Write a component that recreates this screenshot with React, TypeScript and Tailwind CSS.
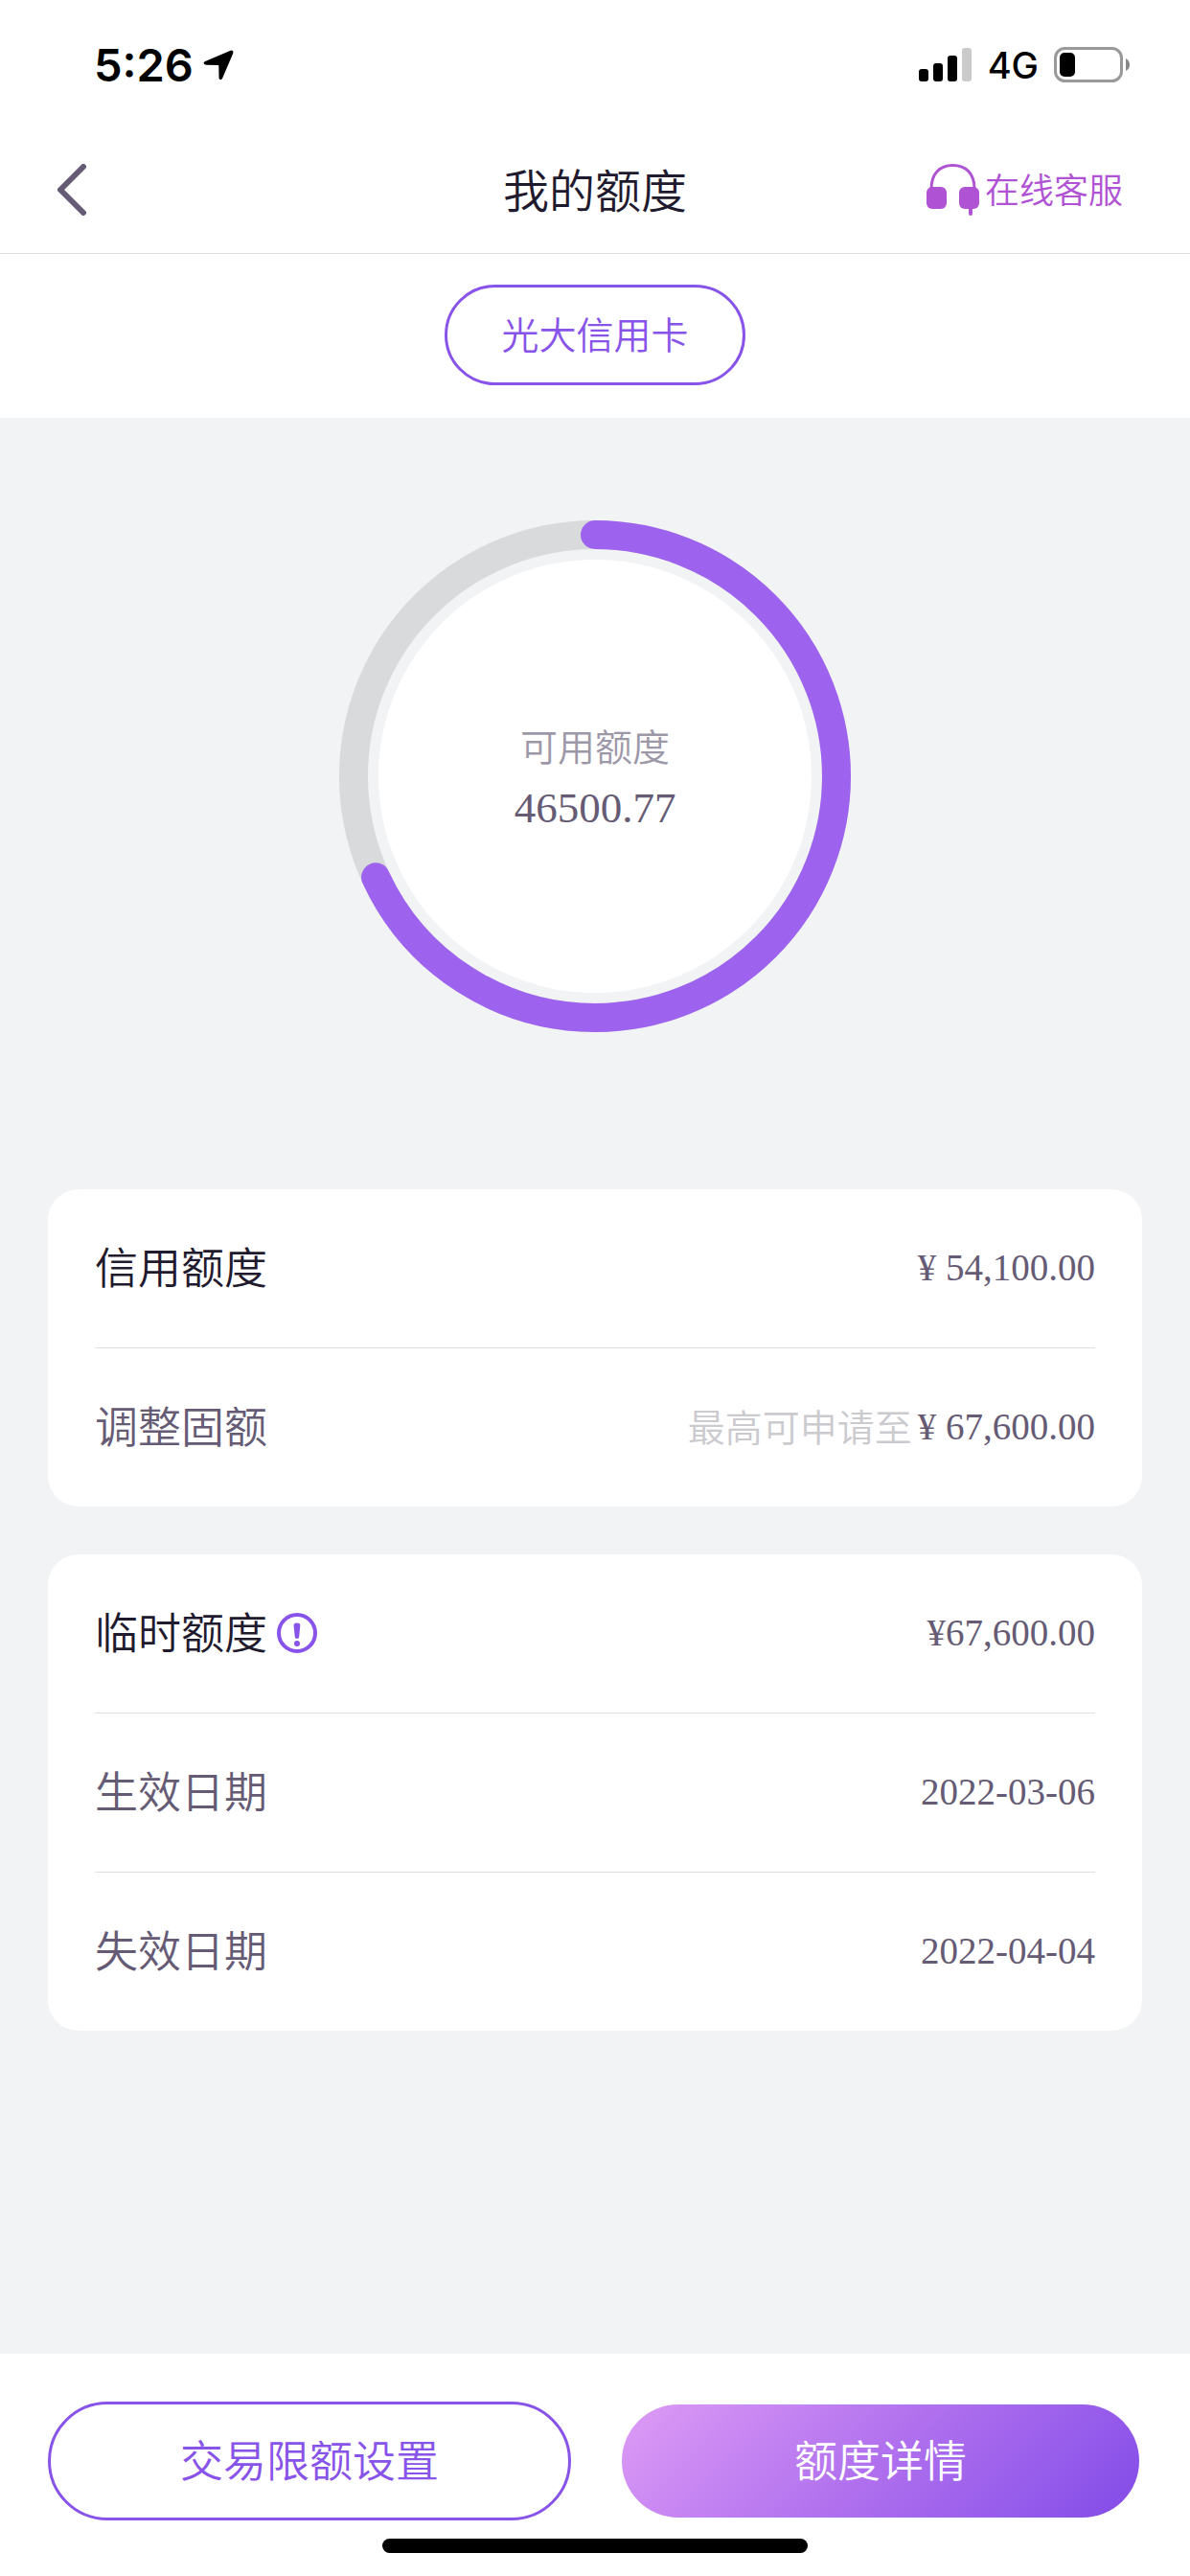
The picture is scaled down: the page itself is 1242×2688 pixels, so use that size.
interface LimitRow {
  label: string;
  value: string;
  hint?: string;
  primary?: boolean;
  info?: boolean;
}

const creditRows: LimitRow[] = [
  { label: "信用额度", value: "¥ 54,100.00", primary: true },
  { label: "调整固额", value: "¥ 67,600.00", hint: "最高可申请至" },
];

const temporaryRows: LimitRow[] = [
  { label: "临时额度", value: "¥67,600.00", primary: true, info: true },
  { label: "生效日期", value: "2022-03-06" },
  { label: "失效日期", value: "2022-04-04" },
];

const StatusBar = () => {
  return (
    <div className="flex h-[132px] items-start justify-between pt-12 pr-[62px] pl-[98px] font-['Inter',sans-serif] text-black">
      <div className="flex h-10 items-center gap-2.5">
        <span className="text-[47px] leading-10 font-semibold">5:26</span>
        <svg className="h-8 w-8" viewBox="0 0 32 32" fill="currentColor">
          <path d="M2.2 12.1 L28 0.9 Q32.4 -0.4 31.1 3.9 L20.2 29.6 Q18.9 32 17.3 30.8 Q16.5 30.2 16.5 29 L16.3 16.6 Q16.3 15.9 15.6 15.9 L3.2 15.8 Q0.6 15.4 0.5 13.7 Q0.6 12.7 2.2 12.1Z" />
        </svg>
      </div>
      <div className="flex h-10 items-center gap-4">
        <svg className="h-9 w-14" viewBox="0 0 56 36">
          <rect x="0" y="22" width="10" height="13" rx="3" />
          <rect x="15" y="16" width="10" height="19" rx="3" />
          <rect x="30" y="8" width="10" height="27" rx="3" />
          <rect x="45" y="0" width="10" height="35" rx="3" fill="#cacaca" />
        </svg>
        <span className="text-[38px] leading-10 font-medium">4G</span>
        <svg className="h-[38px] w-20" viewBox="0 0 80 38">
          <rect x="1.5" y="1.5" width="69" height="34" rx="10" fill="none" stroke="#999" strokeWidth="3" />
          <rect x="6" y="6" width="16" height="25" rx="5" />
          <path d="M75 12 Q79 14 79 18.5 Q79 23 75 25Z" fill="#888" />
        </svg>
      </div>
    </div>
  );
};

const Header = () => {
  return (
    <header className="grid h-[133px] grid-cols-3 items-center border-b border-[#dedede] px-[60px]">
      <button aria-label="返回" className="w-8 text-[#655b74]">
        <svg
          className="h-[54px] w-8"
          viewBox="0 0 32 54"
          fill="none"
          stroke="currentColor"
          strokeWidth="6"
          strokeLinecap="round"
          strokeLinejoin="round"
        >
          <path d="M27 3 L3 27 L27 51" />
        </svg>
      </button>
      <h1 className="pb-1 text-center text-[48px] leading-[60px] text-[#1f1a2d]">我的额度</h1>
      <a href="#service" className="flex items-center justify-end gap-1.5 pr-2.5 text-[36px] leading-[54px] text-[#b052d4]">
        <svg className="h-[54px] w-[55px]" viewBox="0 0 55 54" fill="currentColor">
          <path d="M5 26 C5 10 14 1.5 27.5 1.5 C41 1.5 50 10 50 26" fill="none" stroke="currentColor" strokeWidth="3" />
          <rect x="0" y="24" width="21" height="23" rx="6" />
          <rect x="34" y="24" width="21" height="23" rx="6" />
          <rect x="44" y="42" width="4" height="12" rx="2" />
        </svg>
        <span className="pb-1">在线客服</span>
      </a>
    </header>
  );
};

const LimitRing = () => {
  const radius = 252;
  const length = 2 * Math.PI * radius;
  const used = 0.681;

  return (
    <div className="grid place-items-center">
      <svg className="col-start-1 row-start-1 h-[534px] w-[534px]" viewBox="0 0 534 534" fill="none">
        <circle cx="267" cy="267" r={radius} stroke="#d9dadc" strokeWidth="30" />
        <circle cx="267" cy="267" r="226" fill="#fff" />
        <circle
          cx="267"
          cy="267"
          r={radius}
          stroke="#9e63ee"
          strokeWidth="30"
          strokeLinecap="round"
          strokeDasharray={`${length * used} ${length}`}
          transform="rotate(-90 267 267)"
        />
      </svg>
      <div className="col-start-1 row-start-1 text-center">
        <p className="pb-1.5 text-[39px] leading-[60px] text-[#9d98a8]">可用额度</p>
        <p className="font-['Liberation_Serif',serif] text-[45px] leading-[60px] text-[#655b74]">46500.77</p>
      </div>
    </div>
  );
};

const InfoIcon = () => {
  return (
    <svg className="h-[42px] w-[42px]" viewBox="0 0 42 42" fill="none">
      <circle cx="21" cy="21" r="19" stroke="#8853e8" strokeWidth="4" />
      <path d="M17.5 13 Q17.5 10.5 21 10.5 Q24.5 10.5 24.3 13 L23.2 25 Q23 27 21 27 Q19 27 18.8 25Z" fill="#8853e8" />
      <circle cx="21" cy="32" r="3" fill="#8853e8" />
    </svg>
  );
};

const LimitCard = ({ rows }: { rows: LimitRow[] }) => {
  return (
    <dl className="divide-y divide-[#dfdfe1] rounded-[32px] bg-white px-[49px]">
      {rows.map((row) => (
        <div key={row.label} className="box-content flex h-[163px] items-center justify-between pb-0.5">
          <dt
            className={
              row.primary
                ? "flex items-center gap-2.5 text-[45px] leading-[60px] text-[#1f1a2d]"
                : "flex items-center gap-2.5 text-[45px] leading-[60px] text-[#655b74]"
            }
          >
            <span className="pb-1">{row.label}</span>
            {row.info && (
              <button aria-label="临时额度说明">
                <InfoIcon />
              </button>
            )}
          </dt>
          <dd className="flex items-center gap-1.5 text-[39px] leading-[60px] text-[#655b74]">
            {row.hint && <span className="pb-1 text-[#cbcacf]">{row.hint}</span>}
            <span className="font-['Liberation_Serif',serif]">{row.value}</span>
          </dd>
        </div>
      ))}
    </dl>
  );
};

const App = () => {
  return (
    <div className="flex min-h-screen flex-col bg-[#f1f3f5] font-['Noto_Sans_CJK_SC',sans-serif] font-[350]">
      <div className="bg-white">
        <StatusBar />
        <Header />
        <div className="flex justify-center pt-8 pb-[34px]">
          <button className="h-[105px] rounded-full border-3 border-[#8853e8] px-14 pb-1 text-[39px] text-[#8853e8]">
            光大信用卡
          </button>
        </div>
      </div>

      <main className="flex-1 px-[50px] pt-[107px]">
        <LimitRing />
        <div className="mt-[164px] flex flex-col gap-[50px]">
          <LimitCard rows={creditRows} />
          <LimitCard rows={temporaryRows} />
        </div>
      </main>

      <footer className="bg-white px-[50px] pt-[50px] pb-6">
        <div className="grid grid-cols-2 gap-[50px] text-[45px]">
          <button className="h-[124px] rounded-full border-3 border-[#8853e8] pb-1 text-[#8853e8]">交易限额设置</button>
          <button className="h-[124px] rounded-full border-3 border-transparent bg-linear-135 from-[#de9bf5] via-[#b070ee] to-[#834ae8] bg-clip-padding pb-1 text-white">
            额度详情
          </button>
        </div>
        <div className="mx-auto mt-[19px] h-[15px] w-[444px] rounded-full bg-black" />
      </footer>
    </div>
  );
};

export default App;
